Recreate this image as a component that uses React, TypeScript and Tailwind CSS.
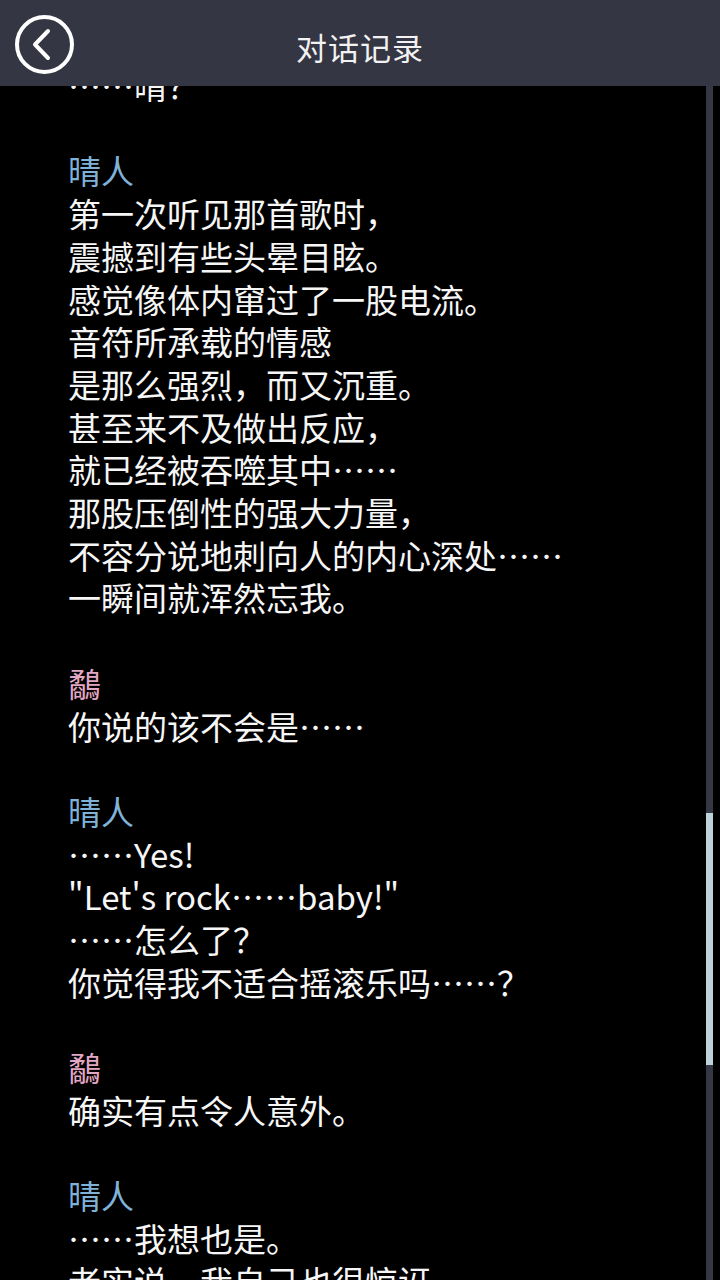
import React from 'react';

type Block = { speaker?: string; color?: string; lines: string[] };

const BLUE = 'text-[#7fb2d9]';
const PINK = 'text-[#e3a7c3]';

const log: Block[] = [
  { lines: ['……晴？'] },
  {
    speaker: '晴人',
    color: BLUE,
    lines: [
      '第一次听见那首歌时，',
      '震撼到有些头晕目眩。',
      '感觉像体内窜过了一股电流。',
      '音符所承载的情感',
      '是那么强烈，而又沉重。',
      '甚至来不及做出反应，',
      '就已经被吞噬其中……',
      '那股压倒性的强大力量，',
      '不容分说地刺向人的内心深处……',
      '一瞬间就浑然忘我。',
    ],
  },
  { speaker: '鷸', color: PINK, lines: ['你说的该不会是……'] },
  {
    speaker: '晴人',
    color: BLUE,
    lines: ['……Yes!', '"Let\'s rock……baby!"', '……怎么了？', '你觉得我不适合摇滚乐吗……？'],
  },
  { speaker: '鷸', color: PINK, lines: ['确实有点令人意外。'] },
  { speaker: '晴人', color: BLUE, lines: ['……我想也是。', '老实说，我自己也很惊讶。'] },
];

// keep the "……" as centred CJK dots even inside latin lines
function Line({ text }: { text: string }) {
  const parts = text.split(/(……)/);
  return (
    <div className="whitespace-pre">
      {parts.map((p, k) =>
        p === '……' ? (
          <span key={k} lang="zh-CN" className="inline-block">……</span>
        ) : (
          <React.Fragment key={k}>{p}</React.Fragment>
        )
      )}
    </div>
  );
}

export default function App() {
  return (
    <div
      className="w-[720px] h-[1280px] bg-black flex flex-col overflow-hidden"
      style={{ fontFamily: '"Noto Sans CJK SC", "Noto Sans", sans-serif' }}
      lang="zh-CN"
    >
      {/* header */}
      <div className="h-[86px] shrink-0 bg-[#353643] relative flex items-center justify-center">
        <button className="absolute left-[14px] top-[14px] w-[61px] h-[61px]">
          <svg viewBox="0 0 61 61" width="61" height="61" fill="none" stroke="white" strokeWidth="4" strokeLinecap="round" strokeLinejoin="round">
            <circle cx="30.5" cy="30.5" r="27.5" />
            <path d="M34 17 L21 30.5 L34 44" />
          </svg>
        </button>
        <h1 className="text-[31px] leading-none text-[#f2f2f2] pt-[6px] tracking-[1px]">对话记录</h1>
      </div>

      {/* log */}
      <div className="flex-1 flex min-h-0">
        <div className="flex-1 overflow-hidden">
          <div className="-mt-[22px] pl-[68px] text-[33px] leading-[42.7px] text-[#f6f6f6]">
            {log.map((b, i) => (
              <div key={i} className="mb-[42.7px]">
                {b.speaker && <div className={b.color}>{b.speaker}</div>}
                {b.lines.map((l, j) => (
                  <Line key={j} text={l} />
                ))}
              </div>
            ))}
          </div>
        </div>
        {/* scrollbar */}
        <div className="w-[7px] shrink-0 bg-[#363744] mr-[7px]">
          <div className="mt-[727px] h-[252px] bg-[#bdd2db]" />
        </div>
      </div>
    </div>
  );
}
